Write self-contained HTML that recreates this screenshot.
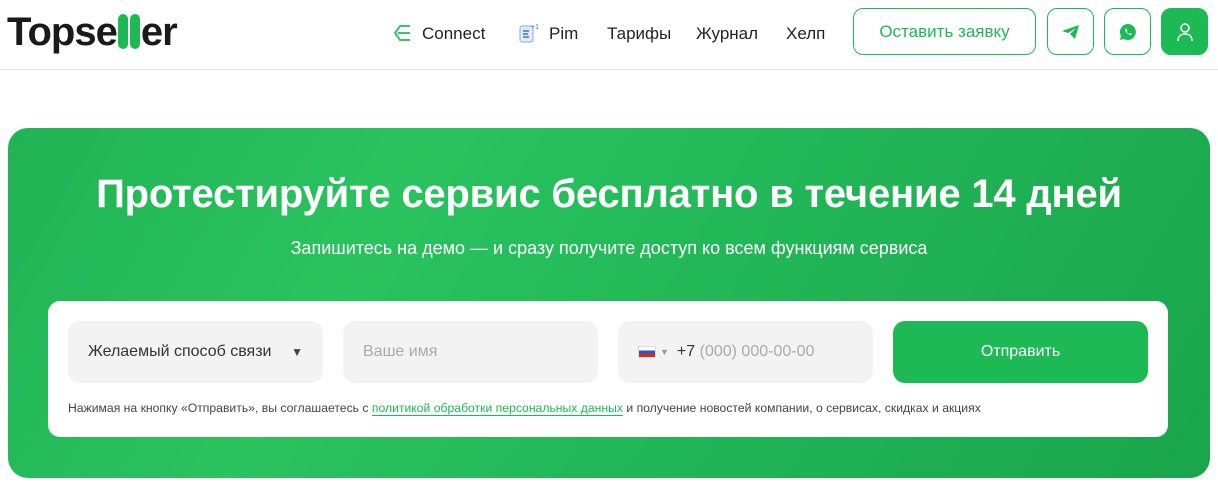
<!DOCTYPE html>
<html><head><meta charset="utf-8"><style>
*{box-sizing:border-box;margin:0;padding:0}
body{width:1218px;height:496px;background:#fff;font-family:"Liberation Sans",sans-serif;position:relative;overflow:hidden;color:#1e1e1e}
.hdr{position:absolute;left:0;top:0;width:1218px;height:70px;border-bottom:1px solid #e6e6e6}
.logo{position:absolute;left:7px;top:10px;font-size:40px;font-weight:bold;letter-spacing:-1px;color:#1a1a1a}
.logo i{display:inline-block;width:10px;height:35px;background:#1db954;border-radius:5px;margin:0 1px;vertical-align:-4px}
.nav{position:absolute;top:24px;font-size:17px;color:#222}
.btn{position:absolute;top:8px;height:47px;border:1.5px solid #1db954;border-radius:10px;color:#1db954;display:flex;align-items:center;justify-content:center}
.card{position:absolute;left:8px;top:128px;width:1202px;height:350px;border-radius:20px;background:linear-gradient(120deg,#21b354 0%,#2ac35e 30%,#22b858 55%,#1aa54b 100%);overflow:hidden}
h1{position:absolute;top:172px;left:0;width:1218px;text-align:center;color:#fff;font-size:40px;font-weight:bold;letter-spacing:-0.2px}
.sub{position:absolute;top:238px;left:0;width:1218px;text-align:center;color:#fff;font-size:18px}
.form{position:absolute;left:48px;top:301px;width:1120px;height:136px;background:#fff;border-radius:12px}
.f{position:absolute;top:20px;height:62px;width:255px;background:#f3f3f3;border-radius:12px;font-size:16px;display:flex;align-items:center;padding-left:20px}
.note{position:absolute;left:20px;top:100px;font-size:12.2px;color:#444}
.note span{color:#1db954;border-bottom:1px solid #1db954}
</style></head><body>
<div class="hdr">
<div class="logo">Topse<i></i><i></i>er</div>
<svg style="position:absolute;left:392px;top:24px" width="20" height="18" viewBox="0 0 20 18"><path d="M18 2H8L3 9l5 7h10M6 9h12" fill="none" stroke="#3cc46c" stroke-width="2"/></svg>
<div class="nav" style="left:422px">Connect</div>
<svg style="position:absolute;left:519px;top:22px" width="20" height="22" viewBox="0 0 20 22"><rect x="1" y="4" width="13" height="16" rx="2" fill="#e4ecff" stroke="#8aa8f0"/><path d="M4 9h6M4 12h5M4 15h6" stroke="#3d6ee8" stroke-width="1.5"/><text x="12" y="7" font-size="7" fill="#3d6ee8" font-family="Liberation Sans">+1</text></svg>
<div class="nav" style="left:549px">Pim</div>
<div class="nav" style="left:607px">Тарифы</div>
<div class="nav" style="left:696px">Журнал</div>
<div class="nav" style="left:786px">Хелп</div>
<div class="btn" style="left:853px;width:183px;font-size:17px">Оставить заявку</div>
<div class="btn" style="left:1047px;width:47px"><svg width="20" height="18" viewBox="0 0 20 18"><path d="M1 8L18 2 14 16 9 11 15 5 7 10z" fill="#1db954"/></svg></div>
<div class="btn" style="left:1104px;width:47px"><svg width="20" height="20" viewBox="0 0 20 20"><path d="M10 2a8 8 0 0 0-7 12l-1 4 4-1a8 8 0 1 0 4-15z" fill="#1db954"/><path d="M7 7c0 3 3 6 6 6l1-1-2-1-1 1c-1-.5-2-1.5-2.5-2.5l1-1-1-2z" fill="#fff"/></svg></div>
<div class="btn" style="left:1161px;width:47px;background:#1db954"><svg width="20" height="20" viewBox="0 0 20 20"><circle cx="10" cy="6" r="4" fill="none" stroke="#fff" stroke-width="1.5"/><path d="M3 19c0-5 3-7 7-7s7 2 7 7" fill="none" stroke="#fff" stroke-width="1.5"/></svg></div>
</div>
<div class="card"></div>
<h1>Протестируйте сервис бесплатно в течение 14 дней</h1>
<div class="sub">Запишитесь на демо — и сразу получите доступ ко всем функциям сервиса</div>
<div class="form">
<div class="f" style="left:20px;color:#333">Желаемый способ связи<span style="position:absolute;right:20px;font-size:12px;color:#444">▼</span></div>
<div class="f" style="left:295px;color:#aaa">Ваше имя</div>
<div class="f" style="left:570px;color:#aaa"><span style="display:inline-block;width:18px;height:12px;background:linear-gradient(#fff 33%,#2c53c9 33% 66%,#d52b1e 66%);border:1px solid #ddd;margin-right:4px"></span><span style="font-size:9px;color:#999;margin-right:8px">▼</span><span style="color:#333">+7</span>&nbsp;(000) 000-00-00</div>
<div class="f" style="left:845px;background:#1db954;color:#fff;justify-content:center;padding:0">Отправить</div>
<div class="note">Нажимая на кнопку «Отправить», вы соглашаетесь с <span>политикой обработки персональных данных</span> и получение новостей компании, о сервисах, скидках и акциях</div>
</div>
</body></html>
